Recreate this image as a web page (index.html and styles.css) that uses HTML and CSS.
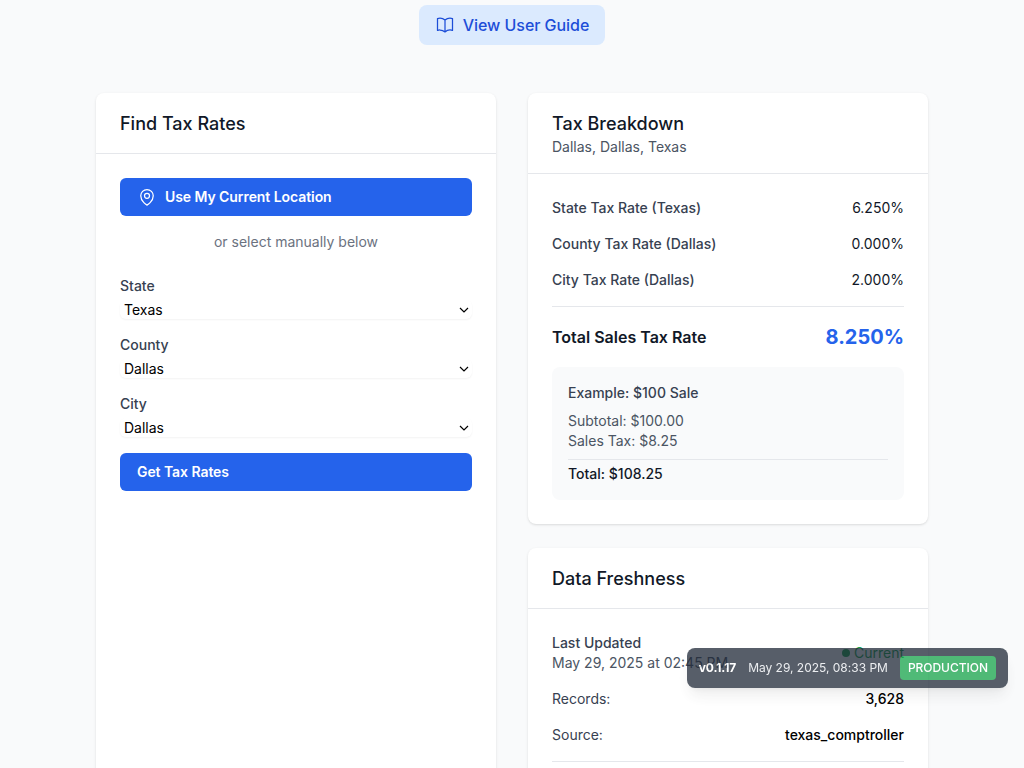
FILE: index.html
```html
<!DOCTYPE html>
<html lang="en">
<head>
<meta charset="utf-8">
<title>Find Tax Rates</title>
<link rel="stylesheet" href="styles.css">
</head>
<body>
<div class="guide">
  <a class="guide-link">
    <svg class="icon" viewBox="0 0 24 24"><path d="M12 6.042A8.967 8.967 0 0 0 6 3.75c-1.052 0-2.062.18-3 .512v14.25A8.987 8.987 0 0 1 6 18c2.305 0 4.408.867 6 2.292m0-14.25a8.966 8.966 0 0 1 6-2.292c1.052 0 2.062.18 3 .512v14.25A8.987 8.987 0 0 0 18 18a8.967 8.967 0 0 0-6 2.292m0-14.25v14.25"/></svg>
    <span>View User Guide</span>
  </a>
</div>
<main class="columns">
  <section class="card">
    <header class="card-header"><h2>Find Tax Rates</h2></header>
    <div class="card-body finder">
      <button class="button">
        <svg class="icon" viewBox="0 0 24 24"><path d="M15 10.5a3 3 0 1 1-6 0 3 3 0 0 1 6 0Z"/><path d="M19.5 10.5c0 7.142-7.5 11.25-7.5 11.25S4.5 17.642 4.5 10.5a7.5 7.5 0 1 1 15 0Z"/></svg>
        <span>Use My Current Location</span>
      </button>
      <p class="hint">or select manually below</p>
      <form class="fields">
        <div class="field"><label for="state">State</label><div class="select"><select id="state"><option>Texas</option></select><svg class="chevron" viewBox="0 0 10 6"><path d="M1 1l4 4 4-4"/></svg></div></div>
        <div class="field"><label for="county">County</label><div class="select"><select id="county"><option>Dallas</option></select><svg class="chevron" viewBox="0 0 10 6"><path d="M1 1l4 4 4-4"/></svg></div></div>
        <div class="field"><label for="city">City</label><div class="select"><select id="city"><option>Dallas</option></select><svg class="chevron" viewBox="0 0 10 6"><path d="M1 1l4 4 4-4"/></svg></div></div>
        <button class="button" type="button">Get Tax Rates</button>
      </form>
    </div>
  </section>
  <div class="results">
    <section class="card">
      <header class="card-header"><h2>Tax Breakdown</h2><p>Dallas, Dallas, Texas</p></header>
      <div class="card-body stack">
        <div class="row"><span class="medium">State Tax Rate (Texas)</span><span class="rate">6.250%</span></div>
        <div class="row"><span class="medium">County Tax Rate (Dallas)</span><span class="rate">0.000%</span></div>
        <div class="row"><span class="medium">City Tax Rate (Dallas)</span><span class="rate">2.000%</span></div>
        <div class="row total"><span class="total-label">Total Sales Tax Rate</span><span class="total-value">8.250%</span></div>
        <div class="example">
          <h3>Example: $100 Sale</h3>
          <p>Subtotal: $100.00</p>
          <p>Sales Tax: $8.25</p>
          <p class="example-total">Total: $108.25</p>
        </div>
      </div>
    </section>
    <section class="card">
      <header class="card-header"><h2>Data Freshness</h2></header>
      <div class="card-body stack">
        <div class="row">
          <div><p class="medium">Last Updated</p><p class="date">May 29, 2025 at 02:45 PM</p></div>
          <span class="status"><i class="dot"></i>Current</span>
        </div>
        <div class="row"><span>Records:</span><span class="value">3,628</span></div>
        <div class="row"><span>Source:</span><span class="value">texas_comptroller</span></div>
        <div class="row divider"></div>
      </div>
    </section>
  </div>
</main>
<aside class="version">
  <span class="version-number">v0.1.17</span>
  <span class="version-date">May 29, 2025, 08:33 PM</span>
  <span class="version-tag">PRODUCTION</span>
</aside>
</body>
</html>
```
FILE: styles.css
```css
*, *::before, *::after { box-sizing: border-box; }
body, h2, h3, p { margin: 0; }
body {
  height: 768px;
  overflow: hidden;
  background: #f9fafb;
  color: #000;
  font: 14px/20px Inter, sans-serif;
}
.icon {
  width: 20px;
  height: 20px;
  margin-right: 8px;
  flex: none;
  fill: none;
  stroke: currentColor;
  stroke-width: 1.5;
  stroke-linecap: round;
  stroke-linejoin: round;
}
.guide { display: flex; justify-content: center; padding-top: 5px; }
.guide-link {
  display: flex;
  align-items: center;
  padding: 8px 16px;
  border-radius: 8px;
  background: #dbeafe;
  color: #1d4ed8;
  font-size: 16px;
  font-weight: 500;
  line-height: 24px;
  letter-spacing: -.04px;
}
.columns {
  display: grid;
  grid-template-columns: 1fr 1fr;
  gap: 32px;
  width: 832px;
  margin: 48px auto 0;
}
.results { display: flex; flex-direction: column; gap: 24px; }
.card {
  overflow: hidden;
  border-radius: 8px;
  background: #fff;
  box-shadow: 0 1px 3px rgba(0,0,0,.1), 0 1px 2px -1px rgba(0,0,0,.1);
}
.card-header { padding: 16px 24px; border-bottom: 1px solid #e5e7eb; color: #4b5563; }
.card-header h2 {
  margin-bottom: -2px;
  color: #111827;
  font-size: 18px;
  font-weight: 500;
  line-height: 30px;
}
.card-body { padding: 24px; }
.button {
  display: flex;
  align-items: center;
  width: 100%;
  padding: 8px 16px;
  border: 1px solid transparent;
  border-radius: 6px;
  background: #2563eb;
  color: #fff;
  font: 600 14px/20px Inter, sans-serif;
  letter-spacing: -.07px;
}
.hint { margin: 16px 0 24px; color: #6b7280; text-align: center; }
.fields { display: flex; flex-direction: column; gap: 16px; }
.field { display: flex; flex-direction: column; gap: 4px; }
.field label { color: #374151; font-weight: 500; }
.select { display: grid; align-items: center; }
.select > * { grid-area: 1 / 1; }
.select select {
  appearance: none;
  width: 100%;
  height: 19px;
  padding: 0 4px;
  border: 0;
  border-radius: 6px;
  background-color: #fff;
  box-shadow: 0 1px 2px rgba(0,0,0,.05);
  color: #000;
  font: 14px Inter, sans-serif;
}
.chevron {
  justify-self: end;
  width: 10px;
  height: 6px;
  margin-right: 3px;
  fill: none;
  stroke: #000;
  stroke-width: 1.2;
  pointer-events: none;
}
.stack { display: flex; flex-direction: column; gap: 16px; }
.row { display: flex; align-items: center; justify-content: space-between; color: #374151; }
.medium { font-weight: 500; }
.rate { color: #111827; }
.total { padding-top: 16px; border-top: 1px solid #e5e7eb; line-height: 28px; }
.total-label { color: #111827; font-size: 16px; font-weight: 600; }
.total-value { color: #2563eb; font-size: 20px; font-weight: 700; }
.example { padding: 16px; border-radius: 8px; background: #f9fafb; color: #4b5563; }
.example h3 { margin-bottom: 8px; color: #374151; font-size: 14px; font-weight: 500; }
.example-total { margin-top: 8px; padding-top: 4px; border-top: 1px solid #e5e7eb; color: #111827; font-weight: 500; }
.date { color: #4b5563; }
.status { display: flex; align-items: center; gap: 4px; color: #16a34a; }
.dot { width: 8px; height: 8px; border-radius: 50%; background: #16a34a; }
.value { color: #000; font-weight: 500; }
.divider { border-top: 1px solid #e5e7eb; }
.version {
  position: fixed;
  right: 16px;
  bottom: 80px;
  display: flex;
  align-items: center;
  gap: 12px;
  padding: 8px 12px;
  border-radius: 8px;
  background: #1f2937;
  box-shadow: 0 10px 15px -3px rgba(0,0,0,.1), 0 4px 6px -4px rgba(0,0,0,.1);
  color: #fff;
  font-size: 12px;
  line-height: 16px;
  opacity: .75;
}
.version-number { font-weight: 700; letter-spacing: -.1px; }
.version-date { color: #e5e7eb; letter-spacing: -.01px; }
.version-tag { padding: 4px 8px; border-radius: 4px; background: #16a34a; font-weight: 500; letter-spacing: -.03px; }
```
